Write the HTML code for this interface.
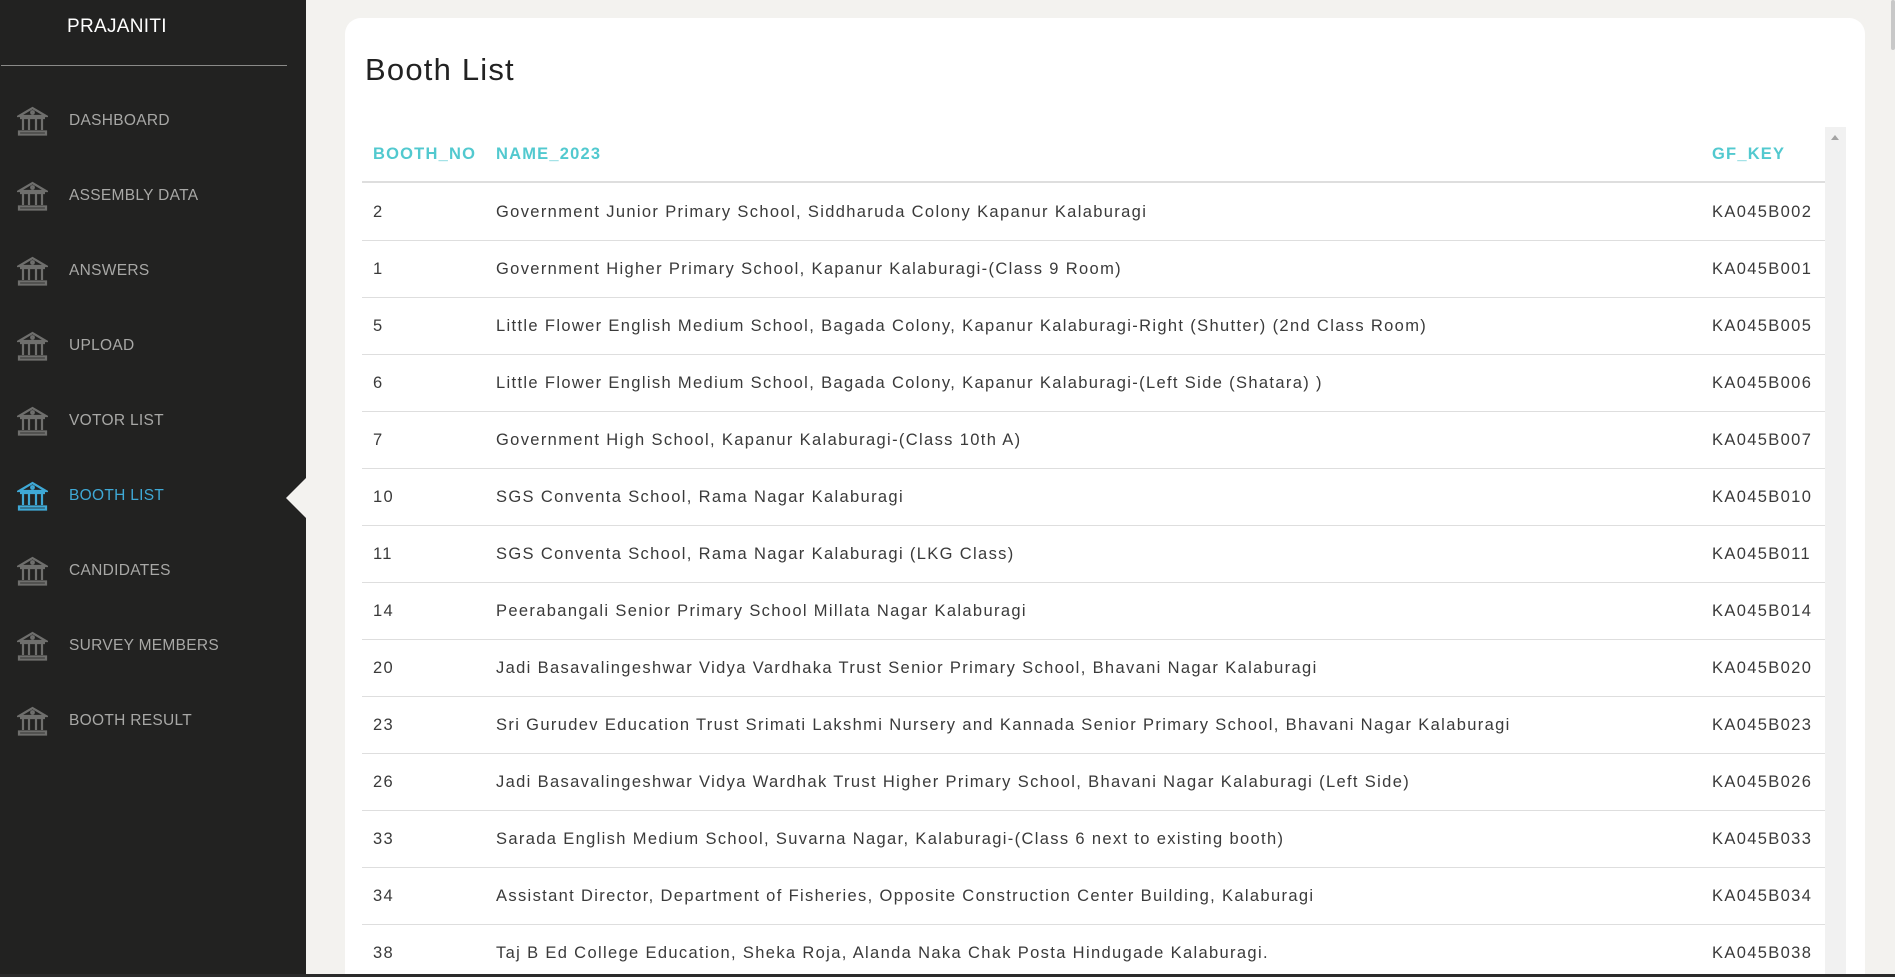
<!DOCTYPE html>
<html><head><meta charset="utf-8"><style>
*{margin:0;padding:0;box-sizing:border-box}
html{overflow:hidden;width:1895px;height:977px}
body{width:1895px;height:977px;overflow:hidden;background:#f3f2ef;font-family:"Liberation Sans",sans-serif;position:relative}
.side{position:absolute;left:0;top:0;width:306px;height:977px;background:#222221}
.brand{position:absolute;left:67px;top:16px;color:#fff;font-size:19px;letter-spacing:0.3px}
.div{position:absolute;left:1px;top:65px;width:286px;height:1px;background:#8a8a88}
.item{position:absolute;left:0;height:40px;width:306px;display:flex;align-items:center;color:#a8a8a6;font-size:15.5px;letter-spacing:0.3px}
.item svg{position:absolute;left:17px;top:5px}
.item span{position:absolute;left:69px}
.item.act{color:#3fa9d6}
.arrow{position:absolute;left:286px;top:477px;width:0;height:0;border-top:21px solid transparent;border-bottom:21px solid transparent;border-right:21px solid #f3f2ef}
.card{position:absolute;left:345px;top:18px;width:1520px;height:959px;background:#fff;border-radius:16px 16px 0 0}
h1{position:absolute;left:365px;top:52px;font-weight:normal;font-size:31px;color:#222;letter-spacing:1.2px}
.sb{position:absolute;left:1825px;top:127px;width:21px;height:850px;background:#f1f1f1}
.sb:before{content:"";position:absolute;left:6px;top:8px;border-left:4px solid transparent;border-right:4px solid transparent;border-bottom:5px solid #a3a3a3}
.row{position:absolute;left:362px;width:1463px;height:57px;border-bottom:1px solid #dedede;font-size:16.5px;color:#3a3a3a;letter-spacing:1.35px;white-space:nowrap}
.row div{position:absolute;top:19px}
.c1{left:11px}.c2{left:134px}.c3{left:1350px}
.hd{color:#52c9cf;font-weight:bold;letter-spacing:1.2px}
.bot{position:absolute;left:0;top:974px;width:1895px;height:3px;background:#2a2a2a}
.rs{position:absolute;left:1891px;top:0;width:4px;height:50px;background:#c8c8c8;border-radius:2px}
</style></head><body>
<div class="side">
<div class="brand">PRAJANITI</div>
<div class="div"></div>
</div>
<div class="arrow"></div>
<div class="card"></div>
<h1>Booth List</h1>
<div class="sb"></div>
<div class="rs"></div>
<div id="menu"></div>
<div id="tbl"></div>
<div class="bot"></div>
<script>
var items=["DASHBOARD","ASSEMBLY DATA","ANSWERS","UPLOAD","VOTOR LIST","BOOTH LIST","CANDIDATES","SURVEY MEMBERS","BOOTH RESULT"];
var h="";
items.forEach(function(t,i){
var c=i==5?"#3fa9d6":"#6f6f6d";
h+='<div class="item'+(i==5?' act':'')+'" style="top:'+(101+i*75)+'px"><svg width="31" height="30" viewBox="0 0 31 30" fill="none" stroke="'+c+'" stroke-width="2.2"><path d="M2 10 L15.5 2 L29 10 Z"/><circle cx="15.5" cy="6.5" r="1.3"/><path d="M3 12 H28 M6 13 V24 M12 13 V24 M19 13 V24 M25 13 V24 M2 25.5 H29 V28.5 H2 Z"/></svg><span>'+t+'</span></div>';
});
document.getElementById("menu").innerHTML=h;
var rows=[["2","Government Junior Primary School, Siddharuda Colony Kapanur Kalaburagi","KA045B002"],
["1","Government Higher Primary School, Kapanur Kalaburagi-(Class 9 Room)","KA045B001"],
["5","Little Flower English Medium School, Bagada Colony, Kapanur Kalaburagi-Right (Shutter) (2nd Class Room)","KA045B005"],
["6","Little Flower English Medium School, Bagada Colony, Kapanur Kalaburagi-(Left Side (Shatara) )","KA045B006"],
["7","Government High School, Kapanur Kalaburagi-(Class 10th A)","KA045B007"],
["10","SGS Conventa School, Rama Nagar Kalaburagi","KA045B010"],
["11","SGS Conventa School, Rama Nagar Kalaburagi (LKG Class)","KA045B011"],
["14","Peerabangali Senior Primary School Millata Nagar Kalaburagi","KA045B014"],
["20","Jadi Basavalingeshwar Vidya Vardhaka Trust Senior Primary School, Bhavani Nagar Kalaburagi","KA045B020"],
["23","Sri Gurudev Education Trust Srimati Lakshmi Nursery and Kannada Senior Primary School, Bhavani Nagar Kalaburagi","KA045B023"],
["26","Jadi Basavalingeshwar Vidya Wardhak Trust Higher Primary School, Bhavani Nagar Kalaburagi (Left Side)","KA045B026"],
["33","Sarada English Medium School, Suvarna Nagar, Kalaburagi-(Class 6 next to existing booth)","KA045B033"],
["34","Assistant Director, Department of Fisheries, Opposite Construction Center Building, Kalaburagi","KA045B034"],
["38","Taj B Ed College Education, Sheka Roja, Alanda Naka Chak Posta Hindugade Kalaburagi.","KA045B038"]];
var t='<div class="row hd" style="top:127px;height:56px;border-bottom:2px solid #dedede"><div class="c1" style="top:18px">BOOTH_NO</div><div class="c2" style="top:18px">NAME_2023</div><div class="c3" style="top:18px">GF_KEY</div></div>';
rows.forEach(function(r,i){t+='<div class="row" style="top:'+(184+i*57)+'px"><div class="c1">'+r[0]+'</div><div class="c2">'+r[1]+'</div><div class="c3">'+r[2]+'</div></div>';});
document.getElementById("tbl").innerHTML=t;
</script>
</body></html>
